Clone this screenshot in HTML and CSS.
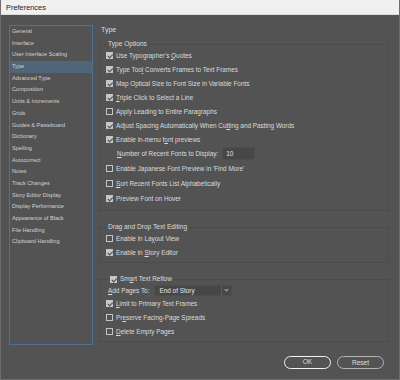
FILE: index.html
```html
<html>
	<head>
		<link rel="stylesheet" href="styles.css">
	</head>
	<body>
		<div class="window">
			<div class="titlebar">Preferences</div>
			<div class="content">
				<ul class="nav">
					<li>General</li>
					<li>Interface</li>
					<li>User Interface Scaling</li>
					<li class="selected">Type</li>
					<li>Advanced Type</li>
					<li>Composition</li>
					<li>Units &amp; Increments</li>
					<li>Grids</li>
					<li>Guides &amp; Pasteboard</li>
					<li>Dictionary</li>
					<li>Spelling</li>
					<li>Autocorrect</li>
					<li>Notes</li>
					<li>Track Changes</li>
					<li>Story Editor Display</li>
					<li>Display Performance</li>
					<li>Appearance of Black</li>
					<li>File Handling</li>
					<li>Clipboard Handling</li>
				</ul>
				<div class="panel">
					<div class="heading">Type</div>

					<fieldset class="group">
						<legend>Type Options</legend>
						<div class="row"><span class="cb on"></span><span>Use Typographer's <u>Q</u>uotes</span></div>
						<div class="row"><span class="cb on"></span><span>Type Too<u>l</u> Converts Frames to Text Frames</span></div>
						<div class="row"><span class="cb on"></span><span>Map Optical Size to Font Size in Variable Fonts</span></div>
						<div class="row"><span class="cb on"></span><span><u>T</u>riple Click to Select a Line</span></div>
						<div class="row"><span class="cb"></span><span>Apply Leading to Entire Paragraphs</span></div>
						<div class="row"><span class="cb on"></span><span>Adjust Spacing Automatically When Cu<u>tt</u>ing and Pasting Words</span></div>
						<div class="row"><span class="cb on"></span><span>Enable in-menu f<u>o</u>nt previews</span></div>
						<div class="row number-row"><span><u>N</u>umber of Recent Fonts to Display:</span><span class="field">10</span></div>
						<div class="row loose"><span class="cb"></span><span>Enable Japanese Font Preview in 'Find More'</span></div>
						<div class="row loose"><span class="cb"></span><span><u>S</u>ort Recent Fonts List Alphabetically</span></div>
						<div class="row loose"><span class="cb on"></span><span>Preview Font on Hover</span></div>
					</fieldset>

					<fieldset class="group drag">
						<legend>Drag and Drop Text Editing</legend>
						<div class="row"><span class="cb"></span><span>Enable in La<u>y</u>out View</span></div>
						<div class="row"><span class="cb on"></span><span>Enable in <u>S</u>tory Editor</span></div>
					</fieldset>

					<fieldset class="group reflow">
						<legend><span class="cb on"></span><span>Sm<u>a</u>rt Text Reflow</span></legend>
						<div class="row pages-row"><span><u>A</u>dd Pages To:</span><span class="select">End of Story<span class="arrow"></span></span></div>
						<div class="row"><span class="cb on"></span><span><u>L</u>imit to Primary Text Frames</span></div>
						<div class="row"><span class="cb"></span><span>Pr<u>e</u>serve Facing-Page Spreads</span></div>
						<div class="row"><span class="cb"></span><span><u>D</u>elete Empty Pages</span></div>
					</fieldset>
				</div>
			</div>
			<div class="buttons">
				<div class="btn default">OK</div>
				<div class="btn">Reset</div>
			</div>
		</div>
	</body>
</html>
```

FILE: styles.css
```css
body {
	margin: 0;
	font-family: "Liberation Sans", Arial, sans-serif;
	font-size: 6.4px;
	color: #dcdcdc;
	background-color: #535353;
}

.window {
	width: 400px;
	height: 380px;
	box-sizing: border-box;
	border: 1px solid #6e6e6e;
	border-top: none;
	display: flex;
	flex-direction: column;
	background-color: #535353;
}

.titlebar {
	height: 14px;
	line-height: 15px;
	padding-left: 5px;
	background-color: #f0f0f0;
	border-bottom: 1px solid #dadada;
	color: #1a1a1a;
	font-size: 7.4px;
}

.content {
	display: flex;
	gap: 6px;
	padding: 10px 10px 0 8px;
}

.nav {
	list-style: none;
	margin: 0;
	padding: 0;
	width: 84px;
	height: 320px;
	box-sizing: border-box;
	border: 1px solid #4f7193;
	font-size: 5.6px;
	color: #d2d2d2;
}

.nav li {
	height: 11.7px;
	line-height: 11.7px;
	padding-left: 2px;
	white-space: nowrap;
}

.nav li.selected {
	background-color: #506579;
}

.panel {
	flex: 1;
}

.heading {
	height: 10px;
	line-height: 10px;
	padding-left: 2px;
	font-size: 7px;
}

.group {
	margin: 5px 0 0 0;
	padding: 0 0 4px 6px;
	border: 1px solid #4b4b4b;
}

.group legend {
	padding: 0 2px;
	height: 8px;
	line-height: 8px;
	font-size: 6.6px;
}

.row {
	display: flex;
	align-items: center;
	height: 14px;
	white-space: nowrap;
}

.row.loose {
	height: 15px;
}

.number-row {
	height: 15px;
	padding-left: 11px;
}

.cb {
	display: inline-block;
	width: 7px;
	height: 7px;
	box-sizing: border-box;
	border: 1px solid #c4c4c4;
	margin-right: 3px;
	flex-shrink: 0;
}

.cb.on {
	background-color: #c9c9c9;
	position: relative;
}

.cb.on::after {
	content: "";
	position: absolute;
	left: 1.5px;
	top: 0;
	width: 1.5px;
	height: 3.5px;
	border: solid #4a4a4a;
	border-width: 0 1px 1px 0;
	transform: rotate(45deg);
}

.field {
	display: inline-block;
	width: 28px;
	height: 11px;
	line-height: 11px;
	margin-left: 4px;
	padding-left: 3px;
	background-color: #474747;
	border: 1px solid #4e4e4e;
	color: #e6e6e6;
}

.drag {
	margin-top: 12px;
	padding-bottom: 3px;
}

.reflow {
	margin-top: 11px;
	padding-bottom: 3px;
}

.reflow legend {
	display: flex;
	align-items: center;
	height: 10px;
	margin-left: 2px;
	font-size: 6.4px;
}

.pages-row {
	height: 12px;
	padding-left: 2px;
}

.select {
	display: inline-flex;
	align-items: center;
	position: relative;
	width: 78px;
	height: 11px;
	box-sizing: border-box;
	margin-left: 5px;
	padding-left: 4px;
	background-color: #474747;
	border: 1px solid #4e4e4e;
	color: #e6e6e6;
}

.arrow {
	position: absolute;
	right: 0;
	top: 0;
	width: 9px;
	height: 9px;
	border-left: 1px solid #5c5c5c;
}

.arrow::after {
	content: "";
	position: absolute;
	left: 3px;
	top: 2.5px;
	width: 2px;
	height: 2px;
	border: solid #b0b0b0;
	border-width: 0 1px 1px 0;
	transform: rotate(45deg);
}

.buttons {
	display: flex;
	justify-content: flex-end;
	gap: 6px;
	margin-top: 11px;
	padding-right: 15px;
}

.btn {
	width: 47px;
	height: 13px;
	box-sizing: border-box;
	border: 1px solid #b4b4b4;
	border-radius: 7px;
	text-align: center;
	line-height: 11px;
	font-size: 6.6px;
	color: #dedede;
}

.btn.default {
	border: 1.5px solid #f2f2f2;
	line-height: 10px;
}
```
